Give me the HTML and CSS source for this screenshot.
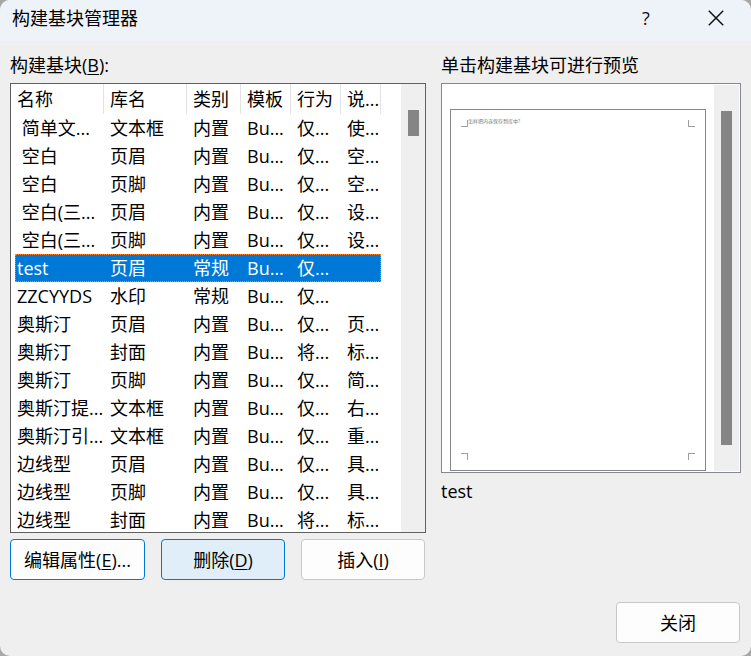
FILE: index.html
```
<!DOCTYPE html>
<html lang="zh-CN">
<head>
<meta charset="utf-8">
<title>构建基块管理器</title>
<link rel="stylesheet" href="styles.css">
</head>
<body>
<div class="dialog">
  <header class="titlebar">
    <h1 class="title">构建基块管理器</h1>
    <button class="caption-button" type="button" aria-label="帮助">?</button>
    <button class="caption-button" type="button" aria-label="退出">
      <svg width="16" height="16" viewBox="0 0 16 16"><path d="M0.8 0.8L15.2 15.2M15.2 0.8L0.8 15.2" fill="none" stroke="#111" stroke-width="1.5"/></svg>
    </button>
  </header>
  <main class="content">
    <section class="blocks">
      <h2 class="label" id="list-label">构建基块(<u>B</u>):</h2>
      <div class="list">
        <div class="rows">
          <table aria-labelledby="list-label">
            <colgroup><col class="c-name"><col class="c-gallery"><col class="c-category"><col class="c-template"><col class="c-behavior"><col class="c-description"></colgroup>
            <thead><tr><th>名称</th><th>库名</th><th>类别</th><th>模板</th><th>行为</th><th>说...</th></tr></thead>
            <tbody>
              <tr><td>&nbsp;简单文...</td><td>文本框</td><td>内置</td><td>Bu...</td><td>仅...</td><td>使...</td></tr>
              <tr><td>&nbsp;空白</td><td>页眉</td><td>内置</td><td>Bu...</td><td>仅...</td><td>空...</td></tr>
              <tr><td>&nbsp;空白</td><td>页脚</td><td>内置</td><td>Bu...</td><td>仅...</td><td>空...</td></tr>
              <tr><td>&nbsp;空白(三...</td><td>页眉</td><td>内置</td><td>Bu...</td><td>仅...</td><td>设...</td></tr>
              <tr><td>&nbsp;空白(三...</td><td>页脚</td><td>内置</td><td>Bu...</td><td>仅...</td><td>设...</td></tr>
              <tr class="selected"><td>test</td><td>页眉</td><td>常规</td><td>Bu...</td><td>仅...</td><td></td></tr>
              <tr><td>ZZCYYDS</td><td>水印</td><td>常规</td><td>Bu...</td><td>仅...</td><td></td></tr>
              <tr><td>奥斯汀</td><td>页眉</td><td>内置</td><td>Bu...</td><td>仅...</td><td>页...</td></tr>
              <tr><td>奥斯汀</td><td>封面</td><td>内置</td><td>Bu...</td><td>将...</td><td>标...</td></tr>
              <tr><td>奥斯汀</td><td>页脚</td><td>内置</td><td>Bu...</td><td>仅...</td><td>简...</td></tr>
              <tr><td>奥斯汀提...</td><td>文本框</td><td>内置</td><td>Bu...</td><td>仅...</td><td>右...</td></tr>
              <tr><td>奥斯汀引...</td><td>文本框</td><td>内置</td><td>Bu...</td><td>仅...</td><td>重...</td></tr>
              <tr><td>边线型</td><td>页眉</td><td>内置</td><td>Bu...</td><td>仅...</td><td>具...</td></tr>
              <tr><td>边线型</td><td>页脚</td><td>内置</td><td>Bu...</td><td>仅...</td><td>具...</td></tr>
              <tr><td>边线型</td><td>封面</td><td>内置</td><td>Bu...</td><td>将...</td><td>标...</td></tr>
            </tbody>
          </table>
        </div>
        <div class="scrollbar"><div class="thumb"></div></div>
      </div>
      <div class="actions">
        <button class="button edit" type="button">编辑属性(<u>E</u>)...</button>
        <button class="button hot" type="button">删除(<u>D</u>)</button>
        <button class="button" type="button">插入(<u>I</u>)</button>
      </div>
    </section>
    <section class="preview">
      <h2 class="label">单击构建基块可进行预览</h2>
      <div class="preview-box">
        <div class="page">
          <div class="page-edge">
            <i class="mark top-left"></i>
            <span class="page-text">怎样把内容保存到库中?</span>
            <i class="mark top-right"></i>
          </div>
          <div class="page-edge">
            <i class="mark bottom-left"></i>
            <i class="mark bottom-right"></i>
          </div>
        </div>
        <div class="scrollbar"><div class="thumb"></div></div>
      </div>
      <p class="preview-name">test</p>
    </section>
  </main>
  <footer class="footer"><button class="button" type="button">关闭</button></footer>
</div>
</body>
</html>
```
FILE: styles.css
```
* {
  box-sizing: border-box;
}

body {
  margin: 0;
  background: #a8a8a8;
  color: #000;
  font: 18px/28px "Open Sans", "Noto Sans CJK SC", sans-serif;
}

h1, h2, p {
  margin: 0;
  font-size: 18px;
  font-weight: 400;
}

u {
  text-underline-offset: 2px;
  text-decoration-thickness: 1px;
}

.dialog {
  display: flex;
  flex-direction: column;
  min-height: 100vh;
  overflow: hidden;
  border-radius: 10px;
  background: #efefef;
}

.titlebar {
  display: flex;
  align-items: center;
  height: 41px;
  padding: 0 0 5px 12px;
  background: #eef3f9;
}

.title {
  flex: 1;
  line-height: 36px;
}

.caption-button {
  display: flex;
  align-items: center;
  justify-content: center;
  width: 70px;
  height: 36px;
  padding: 0;
  border: 0;
  background: none;
  color: #111;
  font: inherit;
}

.content {
  display: grid;
  grid-template-columns: 416fr 300fr;
  gap: 15px;
  padding: 10px 10px 0;
}

.label {
  margin-bottom: 4px;
}

.list {
  display: flex;
  height: 450px;
  border: 1px solid #606060;
  background: #fff;
}

.rows {
  flex: 1;
  min-width: 0;
  overflow: hidden;
  padding-left: 4px;
}

table {
  width: 366px;
  table-layout: fixed;
  border-collapse: separate;
  border-spacing: 0;
}

.c-name { width: 89px; }
.c-gallery { width: 83px; }
.c-category { width: 54px; }
.c-template, .c-behavior { width: 50px; }
.c-description { width: 40px; }

th, td {
  height: 28px;
  padding: 0 0 0 6px;
  overflow: hidden;
  font-weight: 400;
  line-height: 28px;
  text-align: left;
  white-space: nowrap;
}

th {
  height: 30px;
  border-right: 1px solid #e3e3e3;
}

th:first-child, td:first-child {
  padding-left: 2px;
}

.selected {
  background: #0078d7;
  color: #fff;
  outline: 1px dotted #ff8728;
  outline-offset: -1px;
}

.scrollbar {
  flex: none;
  width: 24px;
  background: #efefef;
}

.thumb {
  width: 11px;
  margin: 26px 0 0 7px;
  background: #858585;
}

.list .thumb {
  height: 26px;
}

.actions {
  display: flex;
  gap: 16px;
  margin-top: 6px;
}

.button {
  width: 124px;
  height: 41px;
  padding: 0;
  border: 1px solid #c6c9cc;
  border-radius: 4px;
  background: #fdfdfd;
  color: #000;
  font: inherit;
}

.edit {
  width: 135px;
  border-color: #0078d4;
}

.hot {
  border-color: #0078d4;
  background: #e0eef9;
}

.preview-box {
  display: flex;
  justify-content: space-between;
  height: 390px;
  padding: 1px 1px 1px 8px;
  border: 1px solid #828790;
  background: #fff;
}

.preview-box .scrollbar {
  width: 25px;
}

.preview-box .thumb {
  height: 334px;
}

.page {
  flex: 1;
  display: flex;
  flex-direction: column;
  justify-content: space-between;
  margin: 24px 8px 0 0;
  padding: 10px;
  border: 1px solid #868686;
}

.page-edge {
  display: flex;
  justify-content: space-between;
  height: 7px;
}

.mark {
  width: 7px;
  height: 7px;
  border: 0 solid #a0a0a0;
}

.top-left { border-width: 0 1px 1px 0; }
.top-right { border-width: 0 0 1px 1px; }
.bottom-left { border-width: 1px 1px 0 0; }
.bottom-right { border-width: 1px 0 0 1px; }

.page-text {
  flex: 1;
  color: #777;
  font-size: 5px;
  line-height: 2px;
  white-space: nowrap;
}

.preview-name {
  margin-top: 4px;
}

.footer {
  display: flex;
  justify-content: flex-end;
  margin-top: auto;
  padding: 22px 11px 13px;
}
```
